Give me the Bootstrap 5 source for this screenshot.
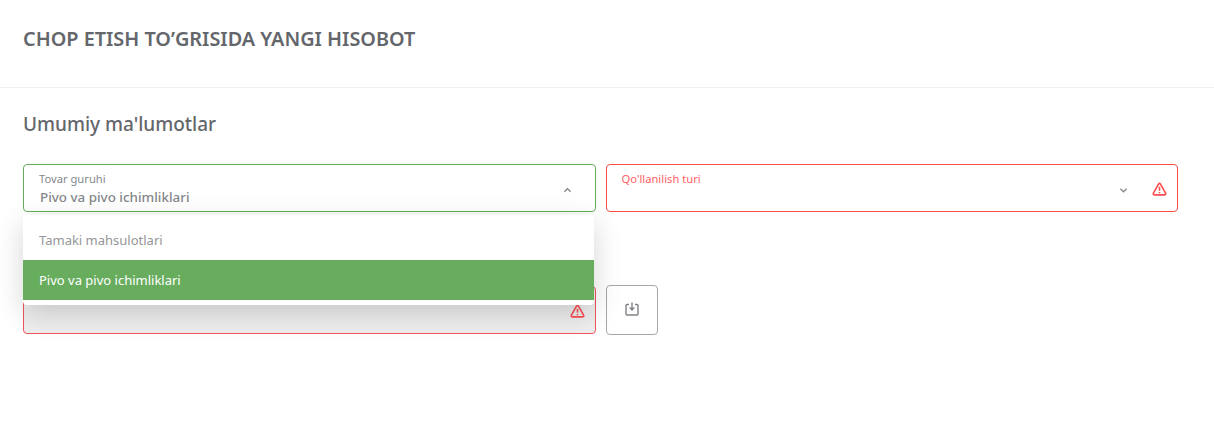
<!DOCTYPE html>
<html lang="en">
<head>
    <meta charset="UTF-8">
    <meta name="viewport" content="width=device-width, initial-scale=1.0">
    <title>Chop etish to'g'risida yangi hisobot</title>
    <link href="https://cdn.jsdelivr.net/npm/bootstrap@5.3.0/dist/css/bootstrap.min.css" rel="stylesheet">
    <style>
        body {
            font-family: "Noto Sans", "Open Sans", sans-serif;
            color: #63666a;
            background: #fff;
        }
        .report-head {
            height: 88px;
            padding: 0 23px 9px;
            border-bottom: 1px solid #f0f0f0;
        }
        .report-title {
            font-size: 19.85px;
            font-weight: 600;
            margin: 0;
            color: #63666a;
        }
        .report-body {
            padding: 0 36px 0 23px;
        }
        .section-title {
            font-size: 19px;
            font-weight: 500;
            line-height: 26px;
            margin: 23px 0 27px;
            color: #63666a;
        }
        .form-line {
            --bs-gutter-x: 10px;
            --bs-gutter-y: 0;
            margin-bottom: 74px;
        }
        .field-box {
            height: 48px;
            border: 1px solid #ff4d4f;
            border-radius: 4px;
            padding: 7px 10px 0 15px;
            background: #fff;
        }
        .field-box.is-open {
            border-color: #68ad5e;
        }
        .field-box.is-grey {
            background: #eeeeee;
            border-color: #f0555a;
        }
        .field-label {
            font-size: 11.2px;
            line-height: 14px;
            color: #85888b;
        }
        .field-box.is-bad .field-label {
            color: #ff5f65;
        }
        .field-value {
            font-size: 13.4px;
            line-height: 18px;
            font-weight: 500;
            margin-left: 1px;
            margin-top: 2px;
            color: #85888b;
        }
        .chev {
            width: 9px;
            height: 6px;
            flex: none;
            margin-bottom: 4px;
        }
        .chev-up {
            margin-right: 13px;
        }
        .warn {
            width: 15px;
            height: 14px;
            flex: none;
            margin-bottom: 6px;
        }
        .pick-menu {
            top: 51px;
            left: 5px;
            right: 7px;
            padding: 5px 0;
            border: 0;
            border-radius: 4px;
            box-shadow: 0 8px 28px rgba(0, 0, 0, .17);
            z-index: 5;
            min-width: 0;
        }
        .pick-menu .dropdown-item {
            height: 40px;
            line-height: 40px;
            padding: 0 16px;
            font-size: 13px;
            color: #949699;
        }
        .pick-menu .dropdown-item.active {
            background: #68ad5e;
            color: #fff;
        }
        .save-btn {
            width: 52px;
            height: 50px;
            margin-top: -1px;
            border: 1px solid #a6a6a6;
            border-radius: 4px;
            background: #fff;
        }
        .save-icon {
            margin-bottom: 2px;
        }
    </style>
</head>
<body>
<header class="report-head d-flex align-items-center">
    <h1 class="report-title">CHOP ETISH TO’GRISIDA YANGI HISOBOT</h1>
</header>

<main class="report-body">
    <h2 class="section-title">Umumiy ma'lumotlar</h2>

    <div class="row form-line">
        <div class="col-6 position-relative">
            <div class="field-box is-open d-flex align-items-center">
                <div class="flex-grow-1 align-self-start">
                    <div class="field-label">Tovar guruhi</div>
                    <div class="field-value">Pivo va pivo ichimliklari</div>
                </div>
                <svg class="chev chev-up" viewBox="0 0 10 6" fill="none" stroke="#8a8a8a" stroke-width="1.5"><path d="M1.500 5 5 1.500 8.500 5"/></svg>
            </div>
            <div class="dropdown-menu show position-absolute pick-menu">
                <a class="dropdown-item" href="#">Tamaki mahsulotlari</a>
                <a class="dropdown-item active" href="#">Pivo va pivo ichimliklari</a>
            </div>
        </div>
        <div class="col-6">
            <div class="field-box is-bad d-flex align-items-center">
                <div class="flex-grow-1 align-self-start">
                    <div class="field-label">Qo'llanilish turi</div>
                </div>
                <svg class="chev" viewBox="0 0 10 6" fill="none" stroke="#8a8a8a" stroke-width="1.5"><path d="M1.500 1.500 5 5 8.500 1.500"/></svg>
                <svg class="warn ms-4" viewBox="0 0 15 14" fill="none" stroke="#ff4d4f" stroke-width="1.6" stroke-linejoin="round"><path d="M7.500 1.300 6.800 1.700 1.300 11.300Q.9 12.700 2.300 12.900H12.700Q14.100 12.700 13.700 11.300L8.200 1.700z"/><path d="M7.500 4.800V8.800M7.500 9.900V11.200"/></svg>
            </div>
        </div>
    </div>

    <div class="row form-line">
        <div class="col-6">
            <div class="field-box is-grey d-flex align-items-center justify-content-end">
                <svg class="warn" viewBox="0 0 15 14" fill="none" stroke="#ff4d4f" stroke-width="1.6" stroke-linejoin="round"><path d="M7.500 1.300 6.800 1.700 1.300 11.300Q.9 12.700 2.300 12.900H12.700Q14.100 12.700 13.700 11.300L8.200 1.700z"/><path d="M7.500 4.800V8.800M7.500 9.900V11.200"/></svg>
            </div>
        </div>
        <div class="col-6">
            <button type="button" class="save-btn d-flex align-items-center justify-content-center p-0">
                <svg class="save-icon" width="14" height="14" viewBox="0 0 14 14" fill="none" stroke="#808285" stroke-width="1.4"><path d="M4 2.500H2a1 1 0 0 0-1 1V12a1 1 0 0 0 1 1h10a1 1 0 0 0 1-1V3.500a1 1 0 0 0-1-1h-2"/><path d="M7 .5V8"/><path d="M3.800 5.500 7 9l3.200-3.500z" fill="#808285" stroke="none"/></svg>
            </button>
        </div>
    </div>
</main>

<script src="https://cdn.jsdelivr.net/npm/bootstrap@5.3.0/dist/js/bootstrap.bundle.min.js"></script>
</body>
</html>
